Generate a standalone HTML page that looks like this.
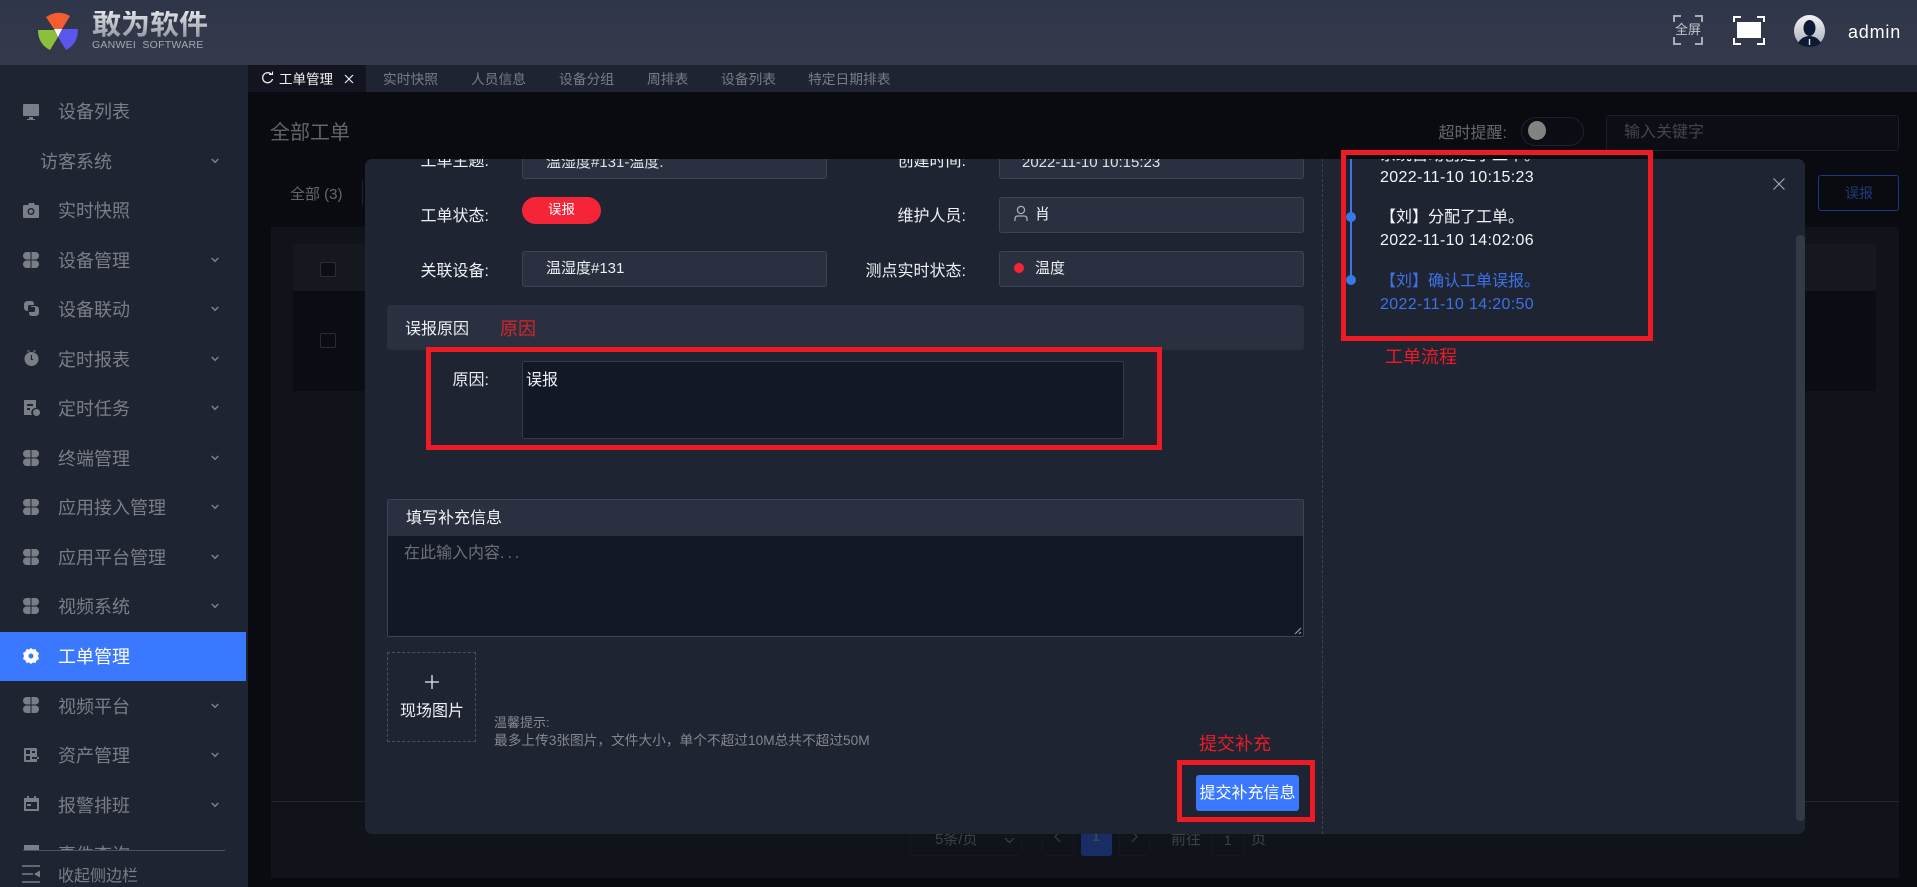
<!DOCTYPE html>
<html lang="zh">
<head>
<meta charset="utf-8">
<title>工单管理</title>
<style>
html,body{margin:0;padding:0;width:1917px;height:887px;overflow:hidden;background:#090b11}
body{position:relative;font-family:"Liberation Sans","Noto Sans CJK SC",sans-serif;color:#fff}
div,span{box-sizing:border-box}
.a{position:absolute}
.t{position:absolute;white-space:nowrap;line-height:20px;height:20px}
.r{text-align:right}
#hd{left:0;top:0;width:1917px;height:65px;background:linear-gradient(#30364a,#343a4a)}
#sb{left:0;top:65px;width:248px;height:822px;background:#1f2433;overflow:hidden}
#tb{left:248px;top:65px;width:1669px;height:27px;background:#1f2433}
.s{font-size:18px;color:#7b7e86;left:58px}
.n{font-size:13.750px;color:#797c84}
.fld{position:absolute;background:#2a3040;border:1px solid #3b4359;border-radius:3px;height:36px}
.lb{font-size:16px;color:#eef0f4}
.red{position:absolute;border:5px solid #ed1c24;box-sizing:border-box}
.rt{font-size:18px;color:#ed1c24}
.box{position:absolute;border:1px solid #16181f;border-radius:3px}
</style>
</head>
<body>
<svg width="0" height="0" style="position:absolute">
<defs>
<symbol id="pet" viewBox="0 0 16 16"><g fill="#7b7e86"><path d="M3.500 0H7.500V4.500L7.500 7.500H3.500A3.500 3.750 0 0 1 3.500 0Z"/><path d="M8.500 0H12.500A3.500 3.750 0 0 1 12.500 7.500H8.500Z"/><path d="M3.500 8.500H7.500V16H3.500A3.500 3.750 0 0 1 3.500 8.500Z"/><path d="M8.500 8.500H12.500A3.500 3.750 0 0 1 12.500 16H8.500Z"/></g></symbol>
<symbol id="chev" viewBox="0 0 8 6"><path d="M.7 1l3.300 3.300L7.300 1" fill="none" stroke="#7b7e86" stroke-width="1.500"/></symbol>
</defs>
</svg>

<!-- Main content behind modal -->
<div class="a" id="main" style="left:248px;top:92px;width:1669px;height:795px;background:#090b11">
  <div class="t" style="left:22px;top:31px;font-size:20px;color:#62646a">全部工单</div>
  <div class="t r" style="left:1180px;top:32px;width:79px;font-size:16px;color:#65676c">超时提醒:</div>
  <div class="a" style="left:1273px;top:25px;width:63px;height:29px;border:1px solid #1e2230;border-radius:15px;background:#0b0d14"></div>
  <div class="a" style="left:1280px;top:29px;width:18px;height:19px;border-radius:50%;background:#828282"></div>
  <div class="a" style="left:1358px;top:23px;width:293px;height:36px;border:1px solid #1b1f2b;border-radius:3px;background:#0b0e15"></div>
  <div class="t" style="left:1376px;top:31px;font-size:16px;color:#44464c">输入关键字</div>
  <div class="t" style="left:42px;top:93px;font-size:15px;color:#65676c">全部 (3)</div>
  <div class="a" style="left:114px;top:89px;width:1px;height:24px;background:#23262e"></div>
  <div class="a" style="left:1570px;top:83px;width:81px;height:36px;border:1px solid #1b3a80;border-radius:3px"></div>
  <div class="t" style="left:1597px;top:91px;font-size:14px;color:#1e3c7c">误报</div>
  <!-- card -->
  <div class="a" style="left:23px;top:135px;width:1628px;height:651px;background:#10131a">
    <div class="a" style="left:22px;top:17px;width:1583px;height:47px;background:#15181f"></div>
    <div class="a" style="left:22px;top:64px;width:1583px;height:100px;background:#0a0d14"></div>
    <div class="a" style="left:49px;top:35px;width:16px;height:15px;border:1px solid #2a2d36;border-radius:2px;background:#0b0e15"></div>
    <div class="a" style="left:49px;top:106px;width:16px;height:15px;border:1px solid #2a2d36;border-radius:2px"></div>
    <div class="a" style="left:0;top:574px;width:1628px;height:1px;background:#22252d"></div>
    <div class="box" style="left:639px;top:590px;width:112px;height:39px"></div>
    <div class="t" style="left:664px;top:603px;font-size:15px;color:#3f4147">5条/页</div>
    <svg class="a" style="left:733px;top:610px" width="11" height="7" viewBox="0 0 11 7"><path d="M1 1L5.500 5.500L10 1" fill="none" stroke="#3f4147" stroke-width="1.200"/></svg>
    <div class="box" style="left:771px;top:590px;width:32px;height:39px"></div>
    <svg class="a" style="left:783px;top:603px" width="7" height="13" viewBox="0 0 7 13"><path d="M6 1L1 6.500L6 12" fill="none" stroke="#33353b" stroke-width="1.400"/></svg>
    <div class="a" style="left:810px;top:590px;width:31px;height:39px;background:#172d63;border-radius:3px"></div>
    <div class="t" style="left:821px;top:599px;font-size:14px;font-weight:bold;color:#3e4656">1</div>
    <div class="box" style="left:848px;top:590px;width:31px;height:39px"></div>
    <svg class="a" style="left:860px;top:603px" width="7" height="13" viewBox="0 0 7 13"><path d="M1 1L6 6.500L1 12" fill="none" stroke="#33353b" stroke-width="1.400"/></svg>
    <div class="t" style="left:900px;top:603px;font-size:15px;color:#3f4147">前往</div>
    <div class="box" style="left:941px;top:590px;width:32px;height:39px"></div>
    <div class="t" style="left:953px;top:603px;font-size:14px;color:#3f4147">1</div>
    <div class="t" style="left:980px;top:603px;font-size:15px;color:#3f4147">页</div>
  </div>
</div>

<!-- Header -->
<div class="a" id="hd">
  <svg class="a" style="left:0;top:0" width="90" height="60" viewBox="0 0 90 60">
    <path fill="#f45d2f" d="M46 17Q58 9 70 16L62 29H54Z"/>
    <path fill="#8cc03c" d="M38 30H54L58 37L50 50Q38 44 38 30Z"/>
    <path fill="#5a55ec" d="M62 29H78Q78 44 66 50L58 37Z"/>
    <path fill="#fff" d="M54 29H62L58 37Z"/>
  </svg>
  <div class="t" style="left:92px;top:11px;height:29px;line-height:29px;font-size:29px;font-weight:bold;background:linear-gradient(#e4e5ea,#8f919b);-webkit-background-clip:text;background-clip:text;color:transparent">敢为软件</div>
  <div class="t" style="left:92px;top:40px;height:10px;line-height:10px;font-size:10.500px;letter-spacing:.25px;color:#a5a8b0">GANWEI&nbsp; SOFTWARE</div>
  <!-- fullscreen text icon -->
  <svg class="a" style="left:1673px;top:15px" width="30" height="30" viewBox="0 0 30 30">
    <path d="M1 7V1H8M22 1H29V7M29 22V29H22M8 29H1V22" fill="none" stroke="#a9acb6" stroke-width="2"/>
  </svg>
  <div class="t" style="left:1675px;top:20px;font-size:13px;color:#c4c6cd">全屏</div>
  <svg class="a" style="left:1733px;top:15px" width="32" height="30" viewBox="0 0 32 30">
    <path d="M1 7V2H8M24 2H31V7M31 23V29H24M8 29H1V23" fill="none" stroke="#fff" stroke-width="2"/>
    <rect x="4" y="7" width="24" height="16" fill="#fff"/>
  </svg>
  <svg class="a" style="left:1794px;top:15px" width="31" height="32" viewBox="0 0 31 32">
    <defs><linearGradient id="av" x1="0" y1="0" x2="0" y2="1"><stop offset="0" stop-color="#f2f3f6"/><stop offset="1" stop-color="#a8acb8"/></linearGradient></defs>
    <ellipse cx="15.500" cy="16" rx="15.500" ry="16" fill="url(#av)"/>
    <ellipse cx="15.500" cy="13" rx="6" ry="8" fill="#0e1a33"/>
    <path d="M4 28Q8 21 15.500 21T27 28Q22 32 15.500 32T4 28Z" fill="#0e1a33"/>
    <rect x="14.800" y="24" width="1.400" height="6" fill="#dfe2ea"/>
  </svg>
  <div class="t" style="left:1848px;top:22px;font-size:18px;letter-spacing:.8px;color:#fff">admin</div>
</div>

<!-- Tabs -->
<div class="a" id="tb">
  <div class="a" style="left:0;top:0;width:118px;height:27px;background:#12151f"></div>
  <svg class="a" style="left:13px;top:6px" width="13" height="14" viewBox="0 0 13 14"><path d="M10.500 3.500A5 5 0 1 0 11.500 8" fill="none" stroke="#f0f0f0" stroke-width="1.300"/><path d="M8 3.500h3.500V0.500" fill="none" stroke="#f0f0f0" stroke-width="1.100"/></svg>
  <div class="t" style="left:31px;top:5px;color:#f4f4f4;font-size:13.500px">工单管理</div>
  <svg class="a" style="left:96px;top:9px" width="10" height="10" viewBox="0 0 10 10"><path d="M1 1L9 9M9 1L1 9" stroke="#eee" stroke-width="1.200"/></svg>
  <div class="t n" style="left:135px;top:5px">实时快照</div>
  <div class="t n" style="left:223px;top:5px">人员信息</div>
  <div class="t n" style="left:311px;top:5px">设备分组</div>
  <div class="t n" style="left:399px;top:5px">周排表</div>
  <div class="t n" style="left:473px;top:5px">设备列表</div>
  <div class="t n" style="left:560px;top:5px">特定日期排表</div>
</div>

<!-- Sidebar -->
<div class="a" id="sb">
  <svg class="a" style="left:23px;top:39px" width="16" height="17" viewBox="0 0 16 17"><path fill="#7b7e86" d="M1 0H15Q16 0 16 1V11Q16 12 15 12H1Q0 12 0 11V1Q0 0 1 0ZM6 13H10V15H12V16H4V15H6Z"/></svg>
  <div class="t s" style="top:37px">设备列表</div>
  <div class="t s" style="top:87px;left:40px">访客系统</div>
  <svg class="a" style="left:211px;top:93px" width="8" height="6"><use href="#chev"/></svg>

  <svg class="a" style="left:23px;top:138px" width="16" height="15" viewBox="0 0 16 15"><path fill="#7b7e86" fill-rule="evenodd" d="M1 2H5L6 0H11L12 2H15Q16 2 16 3V14Q16 15 15 15H1Q0 15 0 14V3Q0 2 1 2ZM8 5A3.500 3.500 0 1 0 8 12A3.500 3.500 0 1 0 8 5ZM8 6.500A2 2 0 1 1 8 10.500A2 2 0 1 1 8 6.500Z"/></svg>
  <div class="t s" style="top:136px">实时快照</div>

  <svg class="a" style="left:23px;top:187px" width="16" height="16"><use href="#pet"/></svg>
  <div class="t s" style="top:186px">设备管理</div>
  <svg class="a" style="left:211px;top:192px" width="8" height="6"><use href="#chev"/></svg>

  <svg class="a" style="left:24px;top:236px" width="15" height="15" viewBox="0 0 15 15"><path fill="#7b7e86" d="M4 0H7Q10 0 10 3V4H5.500Q4 4 4 5.500V10H3.500Q0 10 0 6.500V4Q0 0 4 0ZM7 5H11Q15 5 15 9V11Q15 15 11 15H8Q5 15 5 12V11H9.500Q11 11 11 9.500V6.500Q11 6 9 6H7Z"/></svg>
  <div class="t s" style="top:235px">设备联动</div>
  <svg class="a" style="left:211px;top:241px" width="8" height="6"><use href="#chev"/></svg>

  <svg class="a" style="left:24px;top:285px" width="15" height="16" viewBox="0 0 15 16"><path fill="#7b7e86" fill-rule="evenodd" d="M7.500 2A7 7 0 1 1 7.500 16A7 7 0 1 1 7.500 2ZM6.800 5V10H9V9H8V5ZM3 0.500H6V1.500H3ZM9 0.500H12V1.500H9Z"/></svg>
  <div class="t s" style="top:285px">定时报表</div>
  <svg class="a" style="left:211px;top:291px" width="8" height="6"><use href="#chev"/></svg>

  <svg class="a" style="left:24px;top:335px" width="16" height="16" viewBox="0 0 16 16"><path fill="#7b7e86" fill-rule="evenodd" d="M0 0H12V8A4.500 4.500 0 0 0 8 15H0ZM3 4V6H9V4ZM3 8V10H6V8Z"/><circle cx="12.500" cy="12.500" r="3.500" fill="#7b7e86"/></svg>
  <div class="t s" style="top:334px">定时任务</div>
  <svg class="a" style="left:211px;top:340px" width="8" height="6"><use href="#chev"/></svg>

  <svg class="a" style="left:23px;top:385px" width="16" height="16"><use href="#pet"/></svg>
  <div class="t s" style="top:384px">终端管理</div>
  <svg class="a" style="left:211px;top:390px" width="8" height="6"><use href="#chev"/></svg>

  <svg class="a" style="left:23px;top:434px" width="16" height="16"><use href="#pet"/></svg>
  <div class="t s" style="top:433px">应用接入管理</div>
  <svg class="a" style="left:211px;top:439px" width="8" height="6"><use href="#chev"/></svg>

  <svg class="a" style="left:23px;top:484px" width="16" height="16"><use href="#pet"/></svg>
  <div class="t s" style="top:483px">应用平台管理</div>
  <svg class="a" style="left:211px;top:489px" width="8" height="6"><use href="#chev"/></svg>

  <svg class="a" style="left:23px;top:533px" width="16" height="16"><use href="#pet"/></svg>
  <div class="t s" style="top:532px">视频系统</div>
  <svg class="a" style="left:211px;top:538px" width="8" height="6"><use href="#chev"/></svg>

  <div class="a" style="left:0;top:567px;width:246px;height:49px;background:#3a78ff"></div>
  <svg class="a" style="left:23px;top:583px" width="16" height="16" viewBox="0 0 16 16"><path fill="#fff" fill-rule="evenodd" d="M8 0L10 1.500L12.500 1L13.500 3.500L16 5L15 8L16 11L13.500 12.500L12.500 15L10 14.500L8 16L6 14.500L3.500 15L2.500 12.500L0 11L1 8L0 5L2.500 3.500L3.500 1L6 1.500ZM8 5.500A2.500 2.500 0 1 0 8 10.500A2.500 2.500 0 1 0 8 5.500Z"/></svg>
  <div class="t s" style="top:582px;color:#fff">工单管理</div>

  <svg class="a" style="left:23px;top:632px" width="16" height="16"><use href="#pet"/></svg>
  <div class="t s" style="top:632px">视频平台</div>
  <svg class="a" style="left:211px;top:638px" width="8" height="6"><use href="#chev"/></svg>

  <svg class="a" style="left:24px;top:683px" width="15" height="14" viewBox="0 0 15 14"><path fill="#7b7e86" fill-rule="evenodd" d="M0 1Q0 0 1 0H12Q13 0 13 1V14H1Q0 14 0 13ZM2 2V6H6V2ZM2 8V12H6V8ZM8 3V5H11V3ZM8 9V11H15V9Z"/></svg>
  <div class="t s" style="top:681px">资产管理</div>
  <svg class="a" style="left:211px;top:687px" width="8" height="6"><use href="#chev"/></svg>

  <svg class="a" style="left:24px;top:731px" width="15" height="15" viewBox="0 0 15 15"><path fill="#7b7e86" fill-rule="evenodd" d="M3 0H5V2H10V0H12V2H15V15H0V2H3ZM2 6V13H13V6ZM3 8H7V10H3Z"/></svg>
  <div class="t s" style="top:731px">报警排班</div>
  <svg class="a" style="left:211px;top:737px" width="8" height="6"><use href="#chev"/></svg>

  <svg class="a" style="left:24px;top:780px" width="15" height="15" viewBox="0 0 15 15"><rect width="15" height="15" fill="#7b7e86"/></svg>
  <div class="t s" style="top:780px">事件查询</div>

  <div class="a" style="left:0;top:785px;width:248px;height:37px;background:#1f2433"></div>
  <div class="a" style="left:23px;top:785px;width:202px;height:1px;background:#4a5060"></div>
  <svg class="a" style="left:22px;top:800px" width="18" height="18" viewBox="0 0 18 18"><path d="M0 1H18M0 9H11M0 17H18" stroke="#7b7e86" stroke-width="1.500"/><path d="M18 5.500V12.500L12 9Z" fill="#7b7e86"/></svg>
  <div class="t" style="left:58px;top:802px;font-size:16px;color:#7b7e86">收起侧边栏</div>
</div>

<!-- Modal -->
<div class="a" style="left:365px;top:159px;width:1440px;height:675px;background:#1f2433;border-radius:7px;overflow:hidden">
  <!-- row1 -->
  <div class="t lb r" style="left:20px;top:-7px;width:104px">工单主题:</div>
  <div class="fld" style="left:157px;top:-16px;width:305px"></div>
  <div class="t" style="left:181px;top:-6px;font-size:15px;color:#dfe1e6">温湿度#131-温度.</div>
  <div class="t lb r" style="left:497px;top:-7px;width:104px">创建时间:</div>
  <div class="fld" style="left:634px;top:-16px;width:305px"></div>
  <div class="t" style="left:657px;top:-6px;font-size:15px;color:#dfe1e6">2022-11-10 10:15:23</div>
  <!-- row2 -->
  <div class="t lb r" style="left:20px;top:48px;width:104px">工单状态:</div>
  <div class="a" style="left:157px;top:38px;width:79px;height:27px;border-radius:14px;background:#f52537"></div>
  <div class="t" style="left:183px;top:41px;font-size:13.500px;color:#fff">误报</div>
  <div class="t lb r" style="left:497px;top:48px;width:104px">维护人员:</div>
  <div class="fld" style="left:634px;top:38px;width:305px"></div>
  <svg class="a" style="left:649px;top:46px" width="14" height="17" viewBox="0 0 14 17"><circle cx="7" cy="5" r="3.600" fill="none" stroke="#a9acb6" stroke-width="1.300"/><path d="M1 16V14Q1 11 4 11H10Q13 11 13 14V16" fill="none" stroke="#a9acb6" stroke-width="1.300"/></svg>
  <div class="t" style="left:670px;top:46px;font-size:15px;color:#eef0f4">肖</div>
  <!-- row3 -->
  <div class="t lb r" style="left:20px;top:103px;width:104px">关联设备:</div>
  <div class="fld" style="left:157px;top:92px;width:305px"></div>
  <div class="t" style="left:181px;top:100px;font-size:15px;color:#eef0f4">温湿度#131</div>
  <div class="t lb r" style="left:497px;top:103px;width:104px">测点实时状态:</div>
  <div class="fld" style="left:634px;top:92px;width:305px"></div>
  <div class="a" style="left:649px;top:104px;width:10px;height:10px;border-radius:50%;background:#f52537"></div>
  <div class="t" style="left:670px;top:100px;font-size:15px;color:#eef0f4">温度</div>
  <!-- section bar -->
  <div class="a" style="left:22px;top:146px;width:917px;height:45px;background:#2a3040;border-radius:3px"></div>
  <div class="t" style="left:40px;top:161px;font-size:16px;color:#eef0f4">误报原因</div>
  <div class="t" style="left:135px;top:160px;font-size:18px;color:#d9232b">原因</div>
  <!-- reason -->
  <div class="t lb r" style="left:20px;top:212px;width:104px">原因:</div>
  <div class="a" style="left:157px;top:202px;width:602px;height:78px;background:#121826;border:1px solid #353b4c;border-radius:3px"></div>
  <div class="t" style="left:161px;top:212px;font-size:16px;color:#eef0f4">误报</div>
  <!-- fill -->
  <div class="a" style="left:22px;top:340px;width:917px;height:138px;background:#121826;border:1px solid #3b4359;border-radius:2px">
    <div class="a" style="left:0;top:0;width:915px;height:36px;background:#2a3040"></div>
    <svg class="a" style="right:1px;bottom:1px" width="8" height="8" viewBox="0 0 8 8"><path d="M7 1L1 7M7 5L5 7" stroke="#9a9ca4" stroke-width="1.200"/></svg>
  </div>
  <div class="t" style="left:41px;top:350px;font-size:16px;color:#f4f5f7">填写补充信息</div>
  <div class="t" style="left:39px;top:385px;font-size:16px;color:#6e7077">在此输入内容<span style="letter-spacing:3px">...</span></div>
  <!-- upload -->
  <div class="a" style="left:22px;top:493px;width:89px;height:90px;border:1px dashed #4a5062"></div>
  <svg class="a" style="left:60px;top:516px" width="14" height="14" viewBox="0 0 14 14"><path d="M7 0V14M0 7H14" stroke="#e8e9ee" stroke-width="1.300"/></svg>
  <div class="t" style="left:33px;top:543px;font-size:16px;color:#eef0f4;width:68px;text-align:center">现场图片</div>
  <div class="t" style="left:129px;top:554px;font-size:13px;color:#85878d">温馨提示:</div>
  <div class="t" style="left:129px;top:572px;font-size:13.700px;color:#85878d">最多上传3张图片，文件大小，单个不超过10M总共不超过50M</div>
  <!-- submit -->
  <div class="a" style="left:831px;top:616px;width:103px;height:36px;background:#3a78ff;border-radius:3px;text-align:center;font-size:16px;line-height:38px;color:#fff;white-space:nowrap">提交补充信息</div>
  <!-- dashed -->
  <div class="a" style="left:957px;top:0;width:0;height:675px;border-left:1px dashed #3b4152"></div>
  <!-- timeline -->
  <div class="a" style="left:985px;top:0;width:2px;height:121px;background:#3a78e8"></div>
  <div class="a" style="left:981px;top:53px;width:10px;height:10px;border-radius:50%;background:#3a78e8"></div>
  <div class="a" style="left:981px;top:116px;width:10px;height:10px;border-radius:50%;background:#3a78e8"></div>
  <div class="t" style="left:1015px;top:-13px;font-size:16px;color:#f4f5f7">系统自动创建了工单。</div>
  <div class="t" style="left:1015px;top:9px;font-size:16px;letter-spacing:.35px;color:#f4f5f7">2022-11-10 10:15:23</div>
  <div class="t" style="left:1015px;top:49px;font-size:16px;color:#f4f5f7">【刘】分配了工单。</div>
  <div class="t" style="left:1015px;top:72px;font-size:16px;letter-spacing:.35px;color:#f4f5f7">2022-11-10 14:02:06</div>
  <div class="t" style="left:1015px;top:113px;font-size:16px;color:#3c72e6">【刘】确认工单误报。</div>
  <div class="t" style="left:1015px;top:136px;font-size:16px;letter-spacing:.35px;color:#3c72e6">2022-11-10 14:20:50</div>
  <!-- scrollbar -->
  <div class="a" style="left:1431px;top:76px;width:9px;height:586px;background:#343948;border-radius:4px"></div>
  <!-- close -->
  <svg class="a" style="left:1408px;top:19px" width="12" height="12" viewBox="0 0 12 12"><path d="M.5 .5L11.500 11.500M11.500 .5L.5 11.500" stroke="#a9acb6" stroke-width="1.100"/></svg>
</div>

<!-- Annotations -->
<div class="red" style="left:426px;top:347px;width:736px;height:103px"></div>
<div class="red" style="left:1341px;top:150px;width:312px;height:191px"></div>
<div class="red" style="left:1177px;top:760px;width:138px;height:62px"></div>
<div class="t rt" style="left:1385px;top:347px">工单流程</div>
<div class="t rt" style="left:1199px;top:734px">提交补充</div>
</body>
</html>
